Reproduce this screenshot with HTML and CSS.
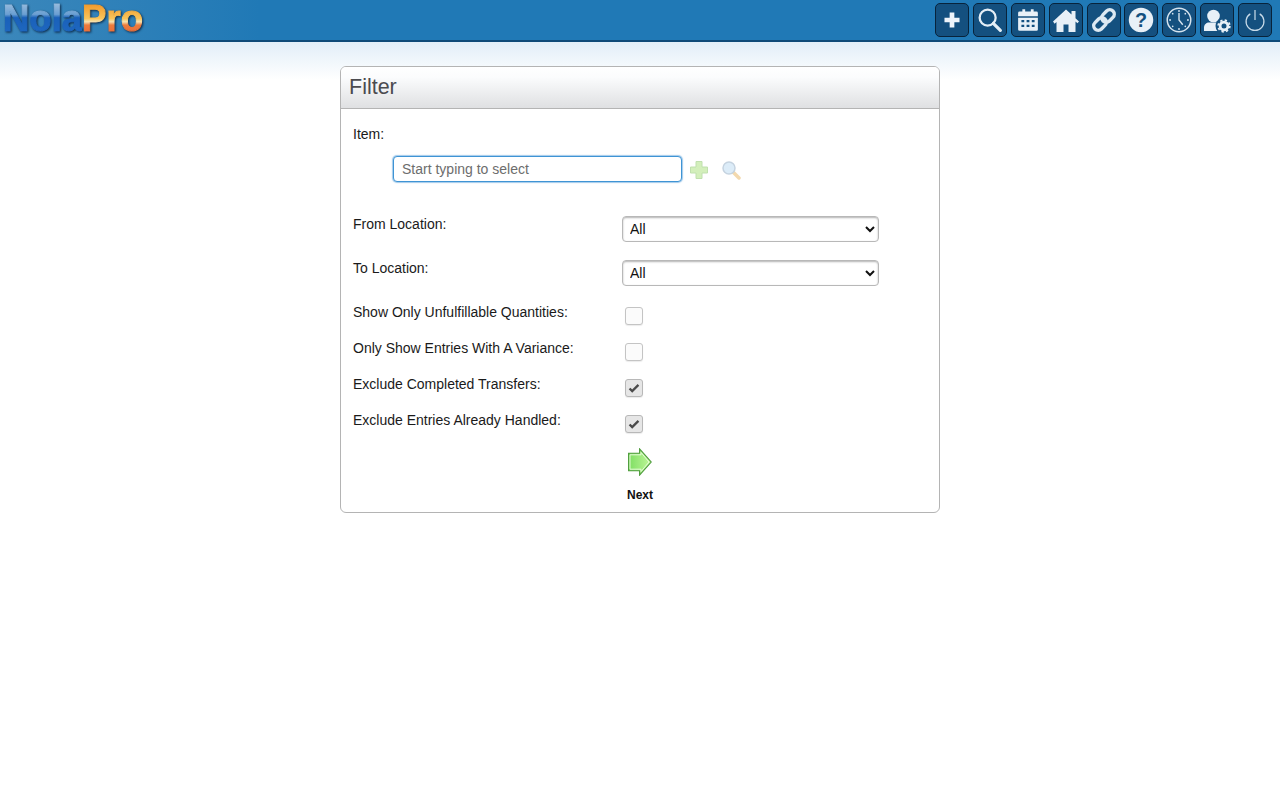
FILE: index.html
```html
<!DOCTYPE html>
<html lang="en">
<head>
<meta charset="utf-8">
<title>Filter</title>
<link rel="stylesheet" href="styles.css">
</head>
<body>
<header class="topbar">
  <div class="logo"><span class="logo-blue">Nola</span><span class="logo-orange">Pro</span></div>
  <nav class="tools">
    <a class="tool"><svg viewBox="0 0 34 34"><path d="M14.5 9h5v5.500H25v5h-5.500V25h-5v-5.500H9v-5h5.500z" fill="#eef4fa"/></svg></a>
    <a class="tool"><svg viewBox="0 0 34 34"><circle cx="14.500" cy="14.500" r="8.500" fill="none" stroke="#e4eef6" stroke-width="2.400"/><path d="M20.500 20.500L28 28" stroke="#e4eef6" stroke-width="3.400" stroke-linecap="round"/></svg></a>
    <a class="tool"><svg viewBox="0 0 34 34"><path d="M8 8h3V5.500h3V8h6V5.500h3V8h3a1.500 1.500 0 0 1 1.500 1.500V13H6.500V9.500A1.500 1.500 0 0 1 8 8zM6.500 14.500h21V27a1.500 1.500 0 0 1-1.500 1.500H8A1.500 1.500 0 0 1 6.500 27z" fill="#e8f0f7"/><path d="M10 17h3v2.500h-3zM15.500 17h3v2.500h-3zM21 17h3v2.500h-3zM10 22h3v2.500h-3zM15.500 22h3v2.500h-3zM21 22h3v2.500h-3z" fill="#135080"/></svg></a>
    <a class="tool"><svg viewBox="0 0 32 32"><path d="M16 5.500l5.500 5V7h4v7.200l3.500 3.300-1.600 1.700-1.900-1.700V28h-7v-7.500h-5V28h-7V18l-1.900 1.700L3 17.500z" fill="#e8f0f7"/></svg></a>
    <a class="tool"><svg viewBox="0 0 32 32"><g fill="none" stroke="#dce8f2" stroke-width="3.400"><rect x="13" y="7.500" width="14" height="9" rx="4.500" transform="rotate(-45 20 12)"/><rect x="5" y="15.500" width="14" height="9" rx="4.500" transform="rotate(-45 12 20)"/></g></svg></a>
    <a class="tool"><svg viewBox="0 0 34 34"><circle cx="17" cy="17" r="13" fill="#e8f0f7"/><text x="17" y="24" class="qmark">?</text></svg></a>
    <a class="tool"><svg viewBox="0 0 34 34"><circle cx="17" cy="17" r="12.500" fill="none" stroke="#d5e3ee" stroke-width="1.600"/><path d="M17 9.500V17l4 5" fill="none" stroke="#d5e3ee" stroke-width="1.500"/><g fill="#d5e3ee"><circle cx="17" cy="7.500" r="1"/><circle cx="17" cy="26.500" r="1"/><circle cx="7.500" cy="17" r="1"/><circle cx="26.500" cy="17" r="1"/><circle cx="10.300" cy="10.300" r=".9"/><circle cx="23.700" cy="10.300" r=".9"/><circle cx="10.300" cy="23.700" r=".9"/><circle cx="23.700" cy="23.700" r=".9"/></g></svg></a>
    <a class="tool"><svg viewBox="0 0 32 32"><circle cx="12.500" cy="12" r="6.300" fill="#e8f0f7"/><path d="M3 27v-3.500C3 20.500 5.500 18.500 8 18.500h9c3 0 5 2 5 5V27z" fill="#e8f0f7"/><circle cx="23" cy="22" r="8.500" fill="#14507f"/><circle cx="23" cy="22" r="3.900" fill="none" stroke="#e8f0f7" stroke-width="2.800"/><circle cx="23" cy="22" r="5.800" fill="none" stroke="#e8f0f7" stroke-width="1.800" stroke-dasharray="2.280 2.280"/></svg></a>
    <a class="tool"><svg viewBox="0 0 34 34"><path d="M12 10.500a9.500 9.500 0 1 0 10 0" fill="none" stroke="#c9dbe9" stroke-width="1.300"/><path d="M17 6.500V17" stroke="#c9dbe9" stroke-width="1.300"/></svg></a>
  </nav>
</header>
<div class="fade">
  <section class="panel">
    <h1 class="panel-title">Filter</h1>
    <form class="panel-body">
      <div class="item-label">Item:</div>
      <div class="item-row">
        <input class="item-input" type="text" placeholder="Start typing to select">
        <svg class="mini-icon" viewBox="0 0 20 20"><path d="M7 1.500h6V7h5.500v6H13v5.500H7V13H1.500V7H7z" fill="#d3efbb" stroke="#c0e0ae"/></svg>
        <svg class="mini-icon search-icon" viewBox="0 0 20 20"><path d="M12 12l6 6" stroke="#f3d9ae" stroke-width="3.500" stroke-linecap="round"/><circle cx="8" cy="8" r="6" fill="#dcecf8" stroke="#c5d3e0" stroke-width="1.500"/></svg>
      </div>
      <div class="row select-row first">
        <label class="label">From Location:</label>
        <select class="select"><option>All</option></select>
      </div>
      <div class="row select-row">
        <label class="label">To Location:</label>
        <select class="select"><option>All</option></select>
      </div>
      <div class="row check-row">
        <label class="label">Show Only Unfulfillable Quantities:</label>
        <span class="check"></span>
      </div>
      <div class="row check-row">
        <label class="label">Only Show Entries With A Variance:</label>
        <span class="check"></span>
      </div>
      <div class="row check-row">
        <label class="label">Exclude Completed Transfers:</label>
        <span class="check on"><svg viewBox="0 0 18 18"><path d="M4 9.500l3 3 7-7" fill="none" stroke="#4a4a4a" stroke-width="2.600"/></svg></span>
      </div>
      <div class="row check-row">
        <label class="label">Exclude Entries Already Handled:</label>
        <span class="check on"><svg viewBox="0 0 18 18"><path d="M4 9.500l3 3 7-7" fill="none" stroke="#4a4a4a" stroke-width="2.600"/></svg></span>
      </div>
      <div class="next">
        <svg class="next-arrow" viewBox="0 0 24 28"><defs><linearGradient id="g" x1="0" x2="1" y1="0" y2="0"><stop offset="0" stop-color="#7ede62"/><stop offset="1" stop-color="#c0f79a"/></linearGradient></defs><path d="M.6 5.200h11V.9L23.200 14 11.600 27.100v-4.300H.6z" fill="url(#g)" stroke="#4c9a3a" stroke-width="1.100"/><path d="M2 6.800h11V4.500l8 9.500-8 9.500v-2.300H2z" fill="none" stroke="#e6fbd8" stroke-width="1"/></svg>
        <div class="next-text">Next</div>
      </div>
    </form>
  </section>
</div>
</body>
</html>
```
FILE: styles.css
```css
* { box-sizing: border-box; }
html, body { margin: 0; height: 100%; background: #fff; }
body { font-family: "Liberation Sans", Arial, sans-serif; font-size: 14px; color: #1a1a1a; }

.topbar {
  height: 42px;
  display: flex;
  justify-content: space-between;
  align-items: flex-start;
  background: linear-gradient(90deg, #3b87bb, #2079b6 260px);
  border-bottom: 2px solid #0f4a78;
}
.logo {
  font-weight: 700;
  font-size: 36.500px;
  line-height: 38px;
  padding-left: 3px;
  filter: drop-shadow(1px 1px 1px rgba(5, 25, 50, .85));
}
.logo span {
  -webkit-background-clip: text;
  background-clip: text;
  color: transparent;
  -webkit-text-stroke: 1px transparent;
}
.logo-blue { background-image: linear-gradient(#94b9dc 16%, #6a9fd2 40%, #1a61ba 48%, #1f68c0 90%); }
.logo-orange { background-image: linear-gradient(#f29a2c 16%, #f8c45a 50%, #f6e2b0 58%, #ee7c3c 66%, #e8693a 90%); }

.tools { display: flex; gap: 3.875px; padding: 3px 8px 0 0; }
.tool {
  width: 34px;
  height: 34px;
  display: block;
  background: #14507f;
  border: 1px solid #08233b;
  border-radius: 5px;
  overflow: hidden;
}
.tool svg { display: block; width: 32px; height: 32px; }
.qmark { font: 700 21px "Liberation Sans", sans-serif; fill: #14507f; text-anchor: middle; }

.fade {
  background: linear-gradient(#e2eef8, #fff 38px) no-repeat;
  padding-top: 24px;
}
.panel {
  width: 600px;
  margin: 0 auto;
  border: 1px solid #b4b4b4;
  border-radius: 6px;
  background: #fff;
}
.panel-title {
  margin: 0;
  height: 42px;
  padding: 8px 8px 0;
  font-size: 21.500px;
  line-height: 24px;
  font-weight: 400;
  color: #4b4b4f;
  background: linear-gradient(#fff, #fbfcfd 25%, #dfe0e2);
  border-bottom: 1px solid #b4b4b4;
  border-radius: 5px 5px 0 0;
}
.panel-body { padding: 17px 12px 10px; height: 403px; }
.item-label { line-height: 16px; }
.item-row { display: flex; align-items: center; margin: 14px 0 0 40px; height: 26px; }
.item-input {
  width: 289px;
  height: 26px;
  padding: 0 8px;
  border: 1px solid #3f94d4;
  border-radius: 4px;
  box-shadow: 0 0 1px 1px rgba(70, 150, 215, .5);
  font: 14px "Liberation Sans", Arial, sans-serif;
  outline: 0;
  background: #fff;
}
.item-input::placeholder { color: #6d6d6d; opacity: 1; }
.mini-icon { width: 20px; height: 20px; margin: 2px 0 0 7px; flex: none; }
.search-icon { margin-left: 12px; }

.row { display: flex; align-items: flex-start; }
.label { width: 269px; line-height: 16px; flex: none; }
.select-row { height: 44px; }
.select-row.first { margin-top: 34px; }
.check-row { height: 36px; }
.select {
  width: 257px;
  height: 26px;
  padding: 0 3px;
  border: 1px solid #b8b8b8;
  border-radius: 4px;
  background: #fff;
  box-shadow: inset 0 1px 2px rgba(0, 0, 0, .3);
  font: 14px "Liberation Sans", Arial, sans-serif;
  color: #111;
}
.check {
  display: block;
  width: 18px;
  height: 18px;
  margin: 3px 0 0 3px;
  background: #fbfbfb;
  border: 1px solid #c4c4c4;
  border-radius: 3px;
  box-shadow: 0 1px 1px rgba(0, 0, 0, .08);
}
.check.on { background: #e6e6e6; border-color: #b8b8b8; }
.check svg { display: block; width: 16px; height: 16px; }

.next { display: flex; flex-direction: column; align-items: center; }
.next-arrow { display: block; width: 24px; height: 28px; }
.next-text { font-size: 12px; font-weight: 700; line-height: 14px; margin-top: 12px; color: #111; }
```
